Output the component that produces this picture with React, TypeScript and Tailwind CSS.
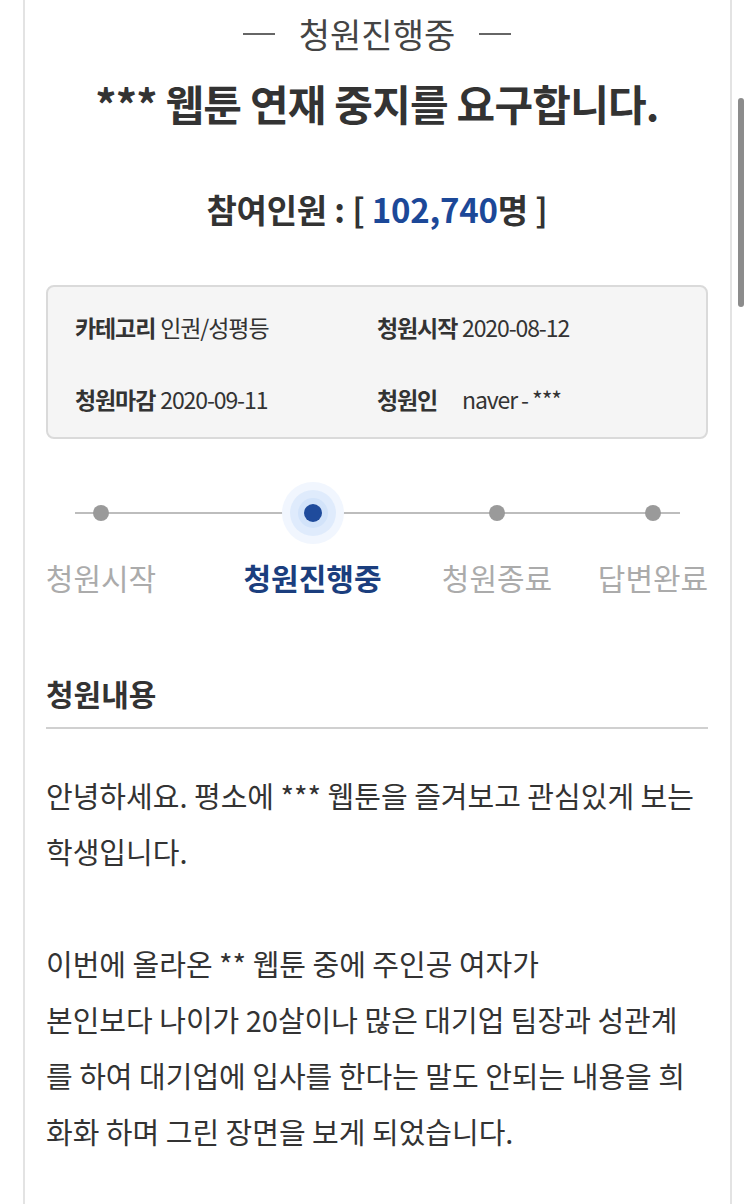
import React from "react";

const font = { fontFamily: '"Noto Sans CJK KR", "Noto Sans", sans-serif' };

const steps = [
  { label: "청원시작", w: "w-[110px]", ml: "ml-0", active: false },
  { label: "청원진행중", w: "w-[140px]", ml: "ml-[87px]", active: true },
  { label: "청원종료", w: "w-[110px]", ml: "ml-[60px]", active: false },
  { label: "답변완료", w: "w-[110px]", ml: "ml-[46px]", active: false },
];

const bodyLines = [
  "안녕하세요. 평소에 *** 웹툰을 즐겨보고 관심있게 보는",
  "학생입니다.",
  "",
  "이번에 올라온 ** 웹툰 중에 주인공 여자가",
  "본인보다 나이가 20살이나 많은 대기업 팀장과 성관계",
  "를 하여 대기업에 입사를 한다는 말도 안되는 내용을 희",
  "화화 하며 그린 장면을 보게 되었습니다.",
];

export default function App() {
  return (
    <div className="relative w-[750px] h-[1204px] overflow-hidden bg-white text-[#333]" style={font}>
      <div className="ml-[23px] w-[709px] h-[1204px] border-x-2 border-[#e3e3e3] pl-[21px] pr-[22px]">
        {/* status */}
        <div className="h-[68px] flex items-center justify-center gap-[24px]">
          <span className="block w-[32px] h-[1.5px] bg-[#666]" />
          <span className="text-[34px] leading-[40px] text-[#444]">청원진행중</span>
          <span className="block w-[32px] h-[1.5px] bg-[#666]" />
        </div>
        {/* title */}
        <h1 className="mt-[11px] text-center text-[42px] leading-[48px] font-bold tracking-[-0.8px] text-[#333] whitespace-nowrap">
          *** 웹툰 연재 중지를 요구합니다.
        </h1>
        {/* count */}
        <div className="mt-[62px] text-center text-[33px] leading-[40px] font-bold tracking-[-0.2px] text-[#333] whitespace-nowrap">
          참여인원 : [ <span className="text-[#1c4898]">102,740</span>명 ]
        </div>
        {/* info box */}
        <div className="mt-[56px] rounded-[8px] border-2 border-[#dadada] bg-[#f5f5f5] pl-[27px] pr-[27px] pt-[25px] pb-[23px]">
          <div className="grid grid-cols-2 gap-y-[42px] text-[23px] leading-[30px] tracking-[-1.1px] text-[#333]">
            <div className="whitespace-nowrap">
              <span className="font-bold">카테고리</span>
              <span className="ml-[5px]">인권/성평등</span>
            </div>
            <div className="whitespace-nowrap">
              <span className="font-bold inline-block w-[85px]">청원시작</span>
              <span>2020-08-12</span>
            </div>
            <div className="whitespace-nowrap">
              <span className="font-bold">청원마감</span>
              <span className="ml-[5px]">2020-09-11</span>
            </div>
            <div className="whitespace-nowrap">
              <span className="font-bold inline-block w-[85px]">청원인</span>
              <span>naver - ***</span>
            </div>
          </div>
        </div>
        {/* progress */}
        <div className="relative mt-[43px] flex">
          <div className="absolute left-[29px] right-[28px] top-[30px] h-[2px] bg-[#bdbdbd]" />
          {steps.map((s) => (
            <div key={s.label} className={`relative flex flex-col items-center ${s.w} ${s.ml}`}>
              <div className="w-[62px] h-[62px] flex items-center justify-center">
                {s.active ? (
                  <div className="w-[62px] h-[62px] rounded-full bg-[#f1f6fe] flex items-center justify-center">
                    <div className="w-[46px] h-[46px] rounded-full bg-[#dfebfc] flex items-center justify-center">
                      <div className="w-[30px] h-[30px] rounded-full bg-[#d2e3fa] flex items-center justify-center">
                        <div className="w-[18px] h-[18px] rounded-full bg-[#1f4b9c]" />
                      </div>
                    </div>
                  </div>
                ) : (
                  <div className="w-[16px] h-[16px] rounded-full bg-[#9a9a9a]" />
                )}
              </div>
              <div
                className={`mt-[15px] text-[30px] leading-[36px] whitespace-nowrap ${
                  s.active ? "font-bold text-[#1b3e7e]" : "text-[#ababab]"
                }`}
              >
                {s.label}
              </div>
            </div>
          ))}
        </div>
        {/* content heading */}
        <div className="mt-[80px] pb-[16px] border-b-2 border-[#d0d0d0]">
          <h2 className="text-[30px] leading-[36px] font-bold text-[#333]">청원내용</h2>
        </div>
        {/* body */}
        <div className="mt-[38px] text-[29px] leading-[56px] text-[#333]">
          {bodyLines.map((l, i) => (
            <div key={i} className="whitespace-nowrap h-[56px]">
              {l}
            </div>
          ))}
        </div>
      </div>
      {/* scrollbar overlay */}
      <div className="absolute left-[738px] top-[98px] w-[6px] h-[209px] rounded-full bg-[#8c8c8c]" />
    </div>
  );
}
